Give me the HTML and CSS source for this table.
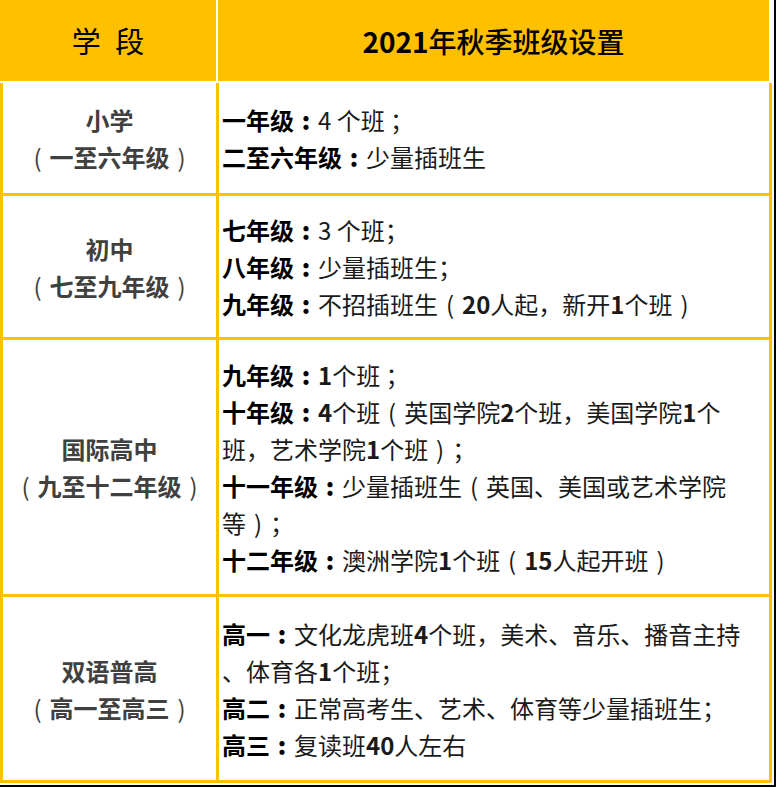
FILE: index.html
```
<!DOCTYPE html>
<html lang="zh-CN">
<head>
<meta charset="utf-8">
<link rel="stylesheet" href="styles.css">
</head>
<body>
<div class="frame">
  <div class="head">
    <div class="hcell"><span class="hl">学 段</span></div>
    <div class="hcell"><span class="hr"><b class="yr">2021</b>年秋季班级设置</span></div>
  </div>
  <div class="body">
    <div class="stage r1"><div>小学<br><span class="p">(</span>一至六年级<span class="p">)</span></div></div>
    <div class="info r1">
      <div class="ln"><b>一年级<span class="c">:</span></b>4 个班 ；</div>
      <div class="ln"><b>二至六年级<span class="c">:</span></b>少量插班生</div>
    </div>

    <div class="stage r2"><div>初中<br><span class="p">(</span>七至九年级<span class="p">)</span></div></div>
    <div class="info r2">
      <div class="ln"><b>七年级<span class="c">:</span></b>3 个班；</div>
      <div class="ln"><b>八年级<span class="c">:</span></b>少量插班生；</div>
      <div class="ln"><b>九年级<span class="c">:</span></b>不招插班生<span class="p">(</span><b class="n">20</b>人起，新开<b class="n">1</b>个班<span class="p">)</span></div>
    </div>

    <div class="stage r3"><div>国际高中<br><span class="p">(</span>九至十二年级<span class="p">)</span></div></div>
    <div class="info r3">
      <div class="ln"><b>九年级<span class="c">:</span></b><b class="n">1</b>个班 ；</div>
      <div class="ln"><b>十年级<span class="c">:</span></b><b class="n">4</b>个班<span class="p">(</span>英国学院<b class="n">2</b>个班，美国学院<b class="n">1</b>个</div>
      <div class="ln">班，艺术学院<b class="n">1</b>个班<span class="p">)</span>；</div>
      <div class="ln"><b>十一年级<span class="c">:</span></b>少量插班生<span class="p">(</span>英国、美国或艺术学院</div>
      <div class="ln">等<span class="p">)</span>；</div>
      <div class="ln"><b>十二年级<span class="c">:</span></b>澳洲学院<b class="n">1</b>个班<span class="p">(</span><b class="n">15</b>人起开班<span class="p">)</span></div>
    </div>

    <div class="stage r4"><div>双语普高<br><span class="p">(</span>高一至高三<span class="p">)</span></div></div>
    <div class="info r4">
      <div class="ln"><b>高一<span class="c">:</span></b>文化龙虎班<b class="n">4</b>个班，美术、音乐、播音主持</div>
      <div class="ln">、体育各<b class="n">1</b>个班；</div>
      <div class="ln"><b>高二<span class="c">:</span></b>正常高考生、艺术、体育等少量插班生；</div>
      <div class="ln"><b>高三<span class="c">:</span></b>复读班<b class="n">40</b>人左右</div>
    </div>
  </div>
</div>
</body>
</html>
```
FILE: styles.css
```
html, body {
  margin: 0;
  padding: 0;
  background: #ffffff;
}

.frame {
  width: 774px;
  height: 785px;
  border-right: 2px solid #000000;
  border-bottom: 2px solid #000000;
  background: #ffffff;
  font-family: "Noto Sans CJK SC", "Noto Sans", sans-serif;
}

.head {
  display: grid;
  grid-template-columns: 216px 551px;
  column-gap: 2px;
  height: 81px;
  margin-bottom: 2px;
}

.hcell {
  background: #ffc000;
  display: flex;
  align-items: center;
  justify-content: center;
  font-size: 28px;
  color: #000000;
  line-height: 1;
}

.hl {
  word-spacing: 8px;
  font-size: 29px;
}

.hr {
  font-weight: 500;
}

.yr {
  font-weight: 700;
}

.body {
  display: grid;
  grid-template-columns: 213px 550px;
  grid-template-rows: 110px 141px 254px 183px;
  gap: 3px;
  padding: 0 3px 3px 3px;
  background: #ffc000;
  width: 766px;
}

.stage {
  background: #ffffff;
  display: flex;
  align-items: center;
  justify-content: center;
  text-align: center;
  font-size: 24px;
  line-height: 37px;
  font-weight: 700;
  color: #404040;
}

.info {
  background: #ffffff;
  display: flex;
  flex-direction: column;
  justify-content: center;
  padding-left: 3px;
  font-size: 24px;
  line-height: 37px;
  color: #1a1a1a;
  white-space: nowrap;
}

.info b {
  font-weight: 700;
  color: #000000;
}

.info b.n {
  color: #1a1a1a;
}

.c {
  display: inline-block;
  width: 1em;
  text-align: center;
  font-weight: 900;
}

.p {
  display: inline-block;
  width: 1em;
  text-align: center;
  font-weight: 400;
}
```
